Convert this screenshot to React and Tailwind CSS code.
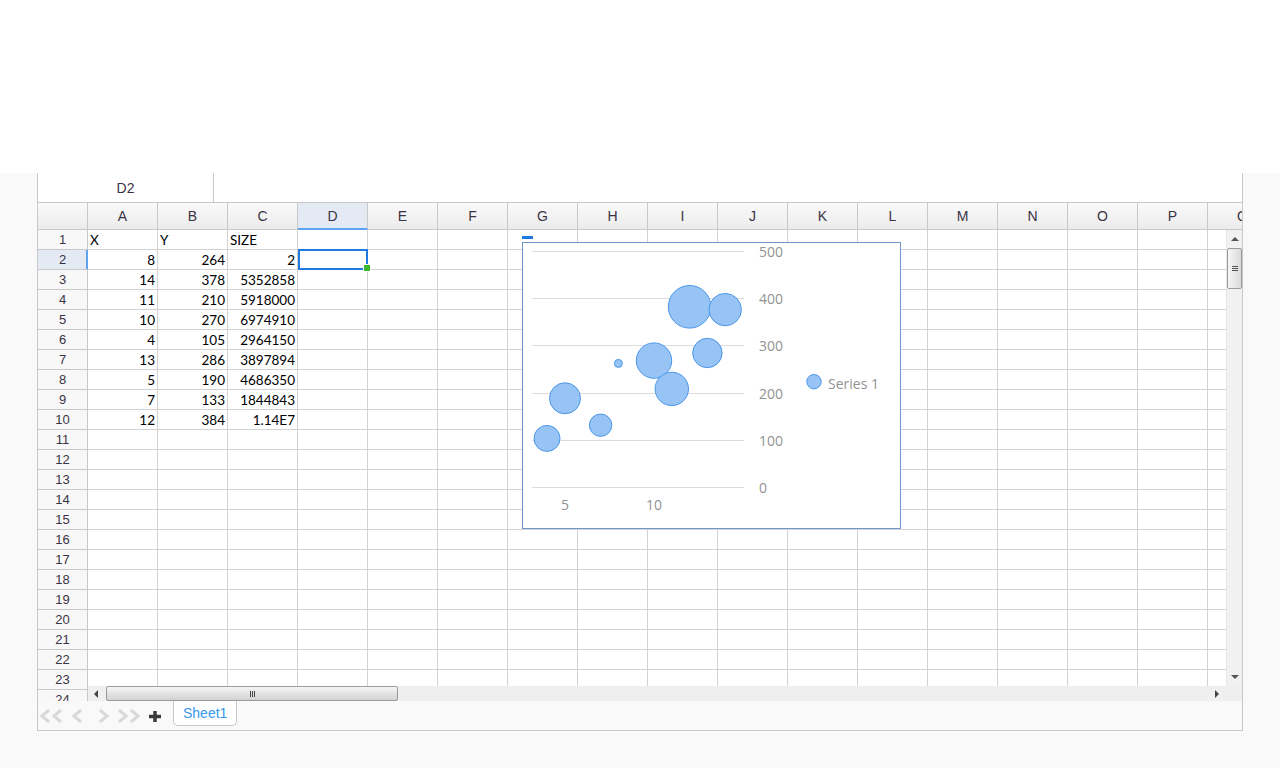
import React from 'react';

const COLS = 'ABCDEFGHIJKLMNOPQ'.split('');
const ROWS = Array.from({ length: 24 }, (_, i) => i + 1);

const DATA = {
  1: ['X', 'Y', 'SIZE'],
  2: ['8', '264', '2'],
  3: ['14', '378', '5352858'],
  4: ['11', '210', '5918000'],
  5: ['10', '270', '6974910'],
  6: ['4', '105', '2964150'],
  7: ['13', '286', '3897894'],
  8: ['5', '190', '4686350'],
  9: ['7', '133', '1844843'],
  10: ['12', '384', '1.14E7'],
};

// local chart coords (origin = inside top-left of chart border)
const BUBBLES = [
  { cx: 24, cy: 195.4, r: 13 },
  { cx: 42, cy: 155.3, r: 15.5 },
  { cx: 77.6, cy: 182.2, r: 11.2 },
  { cx: 95.4, cy: 120.4, r: 4 },
  { cx: 131, cy: 117.6, r: 17.7 },
  { cx: 148.8, cy: 145.9, r: 16.7 },
  { cx: 166.6, cy: 63.8, r: 21.3 },
  { cx: 184.4, cy: 110, r: 14.7 },
  { cx: 202.2, cy: 66.6, r: 16.2 },
];

const GRID_Y = [
  { y: 8.5, label: '500' },
  { y: 55.5, label: '400' },
  { y: 102.5, label: '300' },
  { y: 150.5, label: '200' },
  { y: 197.5, label: '100' },
  { y: 244.5, label: '0' },
];

function BubbleChart() {
  return (
    <>
      <div className="absolute left-[484px] top-[6px] w-[11px] h-[3px] bg-[#1e7be0]" />
      <div className="absolute left-[484px] top-[12px] w-[379px] h-[287px] border border-[#7196cc] bg-white">
        <svg width="377" height="285" className="block font-['Open_Sans',sans-serif]">
          {GRID_Y.map(g => (
            <g key={g.label}>
              <line x1="9" x2="221" y1={g.y} y2={g.y} stroke="#dcdcdc" strokeWidth="1" />
              <text x="236" y={g.y} dominantBaseline="central" fontSize="14" fill="#939393">{g.label}</text>
            </g>
          ))}
          <text x="42" y="261" textAnchor="middle" dominantBaseline="central" fontSize="14" fill="#939393">5</text>
          <text x="131" y="261" textAnchor="middle" dominantBaseline="central" fontSize="14" fill="#939393">10</text>
          {BUBBLES.map((b, i) => (
            <circle key={i} cx={b.cx} cy={b.cy} r={b.r} fill="#97c4f4" stroke="#4a97ea" strokeWidth="1" />
          ))}
          <circle cx="291" cy="138.7" r="7.2" fill="#97c4f4" stroke="#4a97ea" strokeWidth="1" />
          <text x="305" y="140.7" dominantBaseline="central" fontSize="14" fill="#939393">Series 1</text>
        </svg>
      </div>
    </>
  );
}

function Grip({ vertical }) {
  return vertical ? (
    <div className="flex flex-col gap-[1px]">
      <div className="w-[6px] h-[1px] bg-[#555]" />
      <div className="w-[6px] h-[1px] bg-[#555]" />
      <div className="w-[6px] h-[1px] bg-[#555]" />
    </div>
  ) : (
    <div className="flex gap-[1px]">
      <div className="w-[1px] h-[6px] bg-[#444]" />
      <div className="w-[1px] h-[6px] bg-[#444]" />
      <div className="w-[1px] h-[6px] bg-[#444]" />
    </div>
  );
}

function Scrollbars() {
  return (
    <>
      {/* vertical */}
      <div className="absolute right-0 top-0 bottom-[15px] w-[16px] bg-[#f1f1f1] border-l border-[#e6e6e6] flex flex-col items-center">
        <svg width="8" height="5" className="mt-[6px]"><path d="M0 5 L4 1 L8 5 Z" fill="#555" /></svg>
        <div className="mt-[7px] w-[15px] h-[41px] rounded-[2px] border border-[#9a9a9a] bg-linear-to-r from-[#f6f6f6] to-[#d9d9d9] flex items-center justify-center">
          <Grip vertical />
        </div>
        <div className="flex-1" />
        <svg width="8" height="5" className="mb-[6px]"><path d="M0 0 L8 0 L4 4 Z" fill="#555" /></svg>
      </div>
      {/* horizontal */}
      <div className="absolute left-[50px] right-[16px] bottom-0 h-[15px] bg-[#efefef] flex items-center">
        <svg width="5" height="8" className="ml-[5px]"><path d="M5 0 L5 8 L1 4 Z" fill="#444" /></svg>
        <div className="ml-[8px] w-[292px] h-[15px] rounded-[2px] border border-[#9a9a9a] bg-linear-to-b from-[#f6f6f6] to-[#d2d2d2] flex items-center justify-center">
          <Grip />
        </div>
        <div className="flex-1" />
        <svg width="5" height="8" className="mr-[6px]"><path d="M0 0 L0 8 L4 4 Z" fill="#444" /></svg>
      </div>
      <div className="absolute right-0 bottom-0 w-[16px] h-[15px] bg-[#efefef]" />
    </>
  );
}

function SheetNav() {
  const c = '#d9d9d9';
  return (
    <svg width="130" height="28" className="shrink-0">
      <g fill="none" stroke={c} strokeWidth="3">
        <polyline points="11,9 4,15 11,21" />
        <polyline points="23,9 16,15 23,21" />
        <polyline points="43,9 36,15 43,21" />
        <polyline points="62,9 69,15 62,21" />
        <polyline points="81,9 88,15 81,21" />
        <polyline points="93,9 100,15 93,21" />
      </g>
      <g stroke="#3a3a3a" strokeWidth="3.5">
        <line x1="111" x2="123" y1="15.5" y2="15.5" />
        <line x1="117" x2="117" y1="10" y2="21" />
      </g>
    </svg>
  );
}

export default function App() {
  return (
    <div className="min-h-screen bg-[#f9f9f9] font-['Liberation_Sans',Arial,sans-serif]">
      <div className="h-[173px] bg-white" />
      <div className="ml-[37px] w-[1206px] bg-white border-x border-b border-[#c8c8c8]">
        {/* name box */}
        <div className="h-[30px] flex border-b border-[#c8c8c8]">
          <div className="w-[176px] pt-[1px] border-r border-[#c8c8c8] flex items-center justify-center text-[14px] text-[#3a3345]">
            D2
          </div>
        </div>

        {/* column headers */}
        <div className="flex h-[27px] overflow-hidden bg-linear-to-b from-[#fafafa] to-[#ebebeb]">
          <div className="w-[50px] shrink-0 border-r border-b border-[#c8c8c8]" />
          {COLS.map(c => (
            <div
              key={c}
              className={`w-[70px] shrink-0 border-r border-b flex items-center justify-center text-[14px] text-[#3a3345] ${
                c === 'D'
                  ? 'bg-[#e3eaf4] border-r-[#c8c8c8] border-b-[#5ea3ef] shadow-[inset_0_-1px_0_#5ea3ef]'
                  : 'border-[#c8c8c8]'
              }`}
            >
              {c}
            </div>
          ))}
        </div>

        {/* body */}
        <div className="relative h-[471px] overflow-hidden">
          {ROWS.map(r => (
            <div key={r} className="flex h-[20px]">
              <div
                className={`w-[50px] shrink-0 pt-[1px] border-b flex items-center justify-center text-[13px] text-[#3a3345] ${
                  r === 2
                    ? 'bg-[#e3eaf4] border-b-[#c8c8c8] border-r border-r-[#5ea3ef] shadow-[inset_-1px_0_0_#5ea3ef]'
                    : 'bg-[#f8f8f8] border-r border-[#c8c8c8]'
                }`}
              >
                {r}
              </div>
              {COLS.map((c, ci) => {
                const v = DATA[r] && DATA[r][ci];
                return (
                  <div
                    key={c}
                    className={`w-[70px] shrink-0 pt-[2px] border-r border-b border-[#d2d2d2] flex items-center px-[2px] font-['Lato',sans-serif] text-[13.5px] text-black ${
                      r === 1 ? 'justify-start' : 'justify-end'
                    }`}
                  >
                    {v}
                  </div>
                );
              })}
            </div>
          ))}

          {/* selection D2 */}
          <div className="absolute left-[260px] top-[19px] w-[70px] h-[21px] border-2 border-[#1f7ae0]" />
          <div className="absolute left-[325px] top-[34px] w-[8px] h-[8px] bg-[#3cb72e] border border-white" />

          <BubbleChart />
          <Scrollbars />
        </div>

        {/* sheet tabs */}
        <div className="h-[29px] flex bg-[#f9f9f9]">
          <SheetNav />
          <div className="ml-[5px] h-[25px] px-[9px] bg-white border-x border-b border-[#c8c8c8] rounded-b-[5px] flex items-center text-[14px] text-[#3597ea]">
            Sheet1
          </div>
        </div>
      </div>
    </div>
  );
}
